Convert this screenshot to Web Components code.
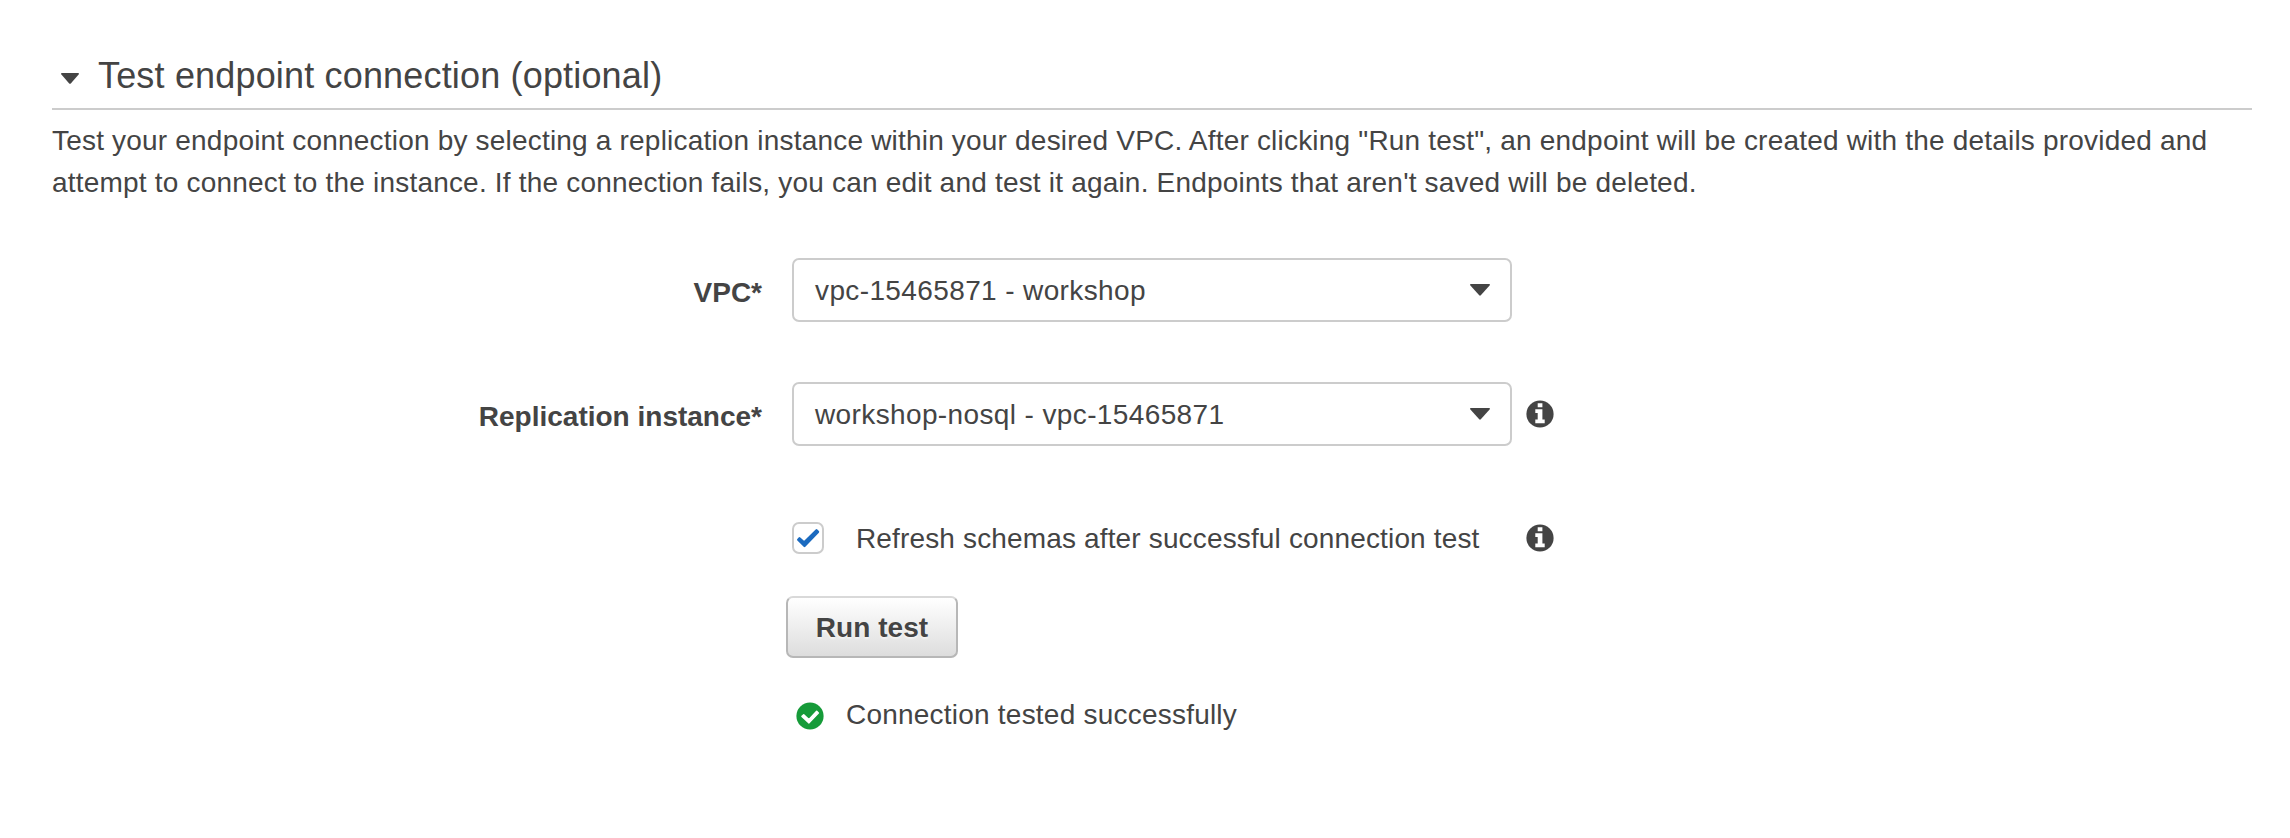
<!DOCTYPE html>
<html lang="en">
<head>
<meta charset="utf-8">
<title>Test endpoint connection</title>
<style>
body{margin:0;background:#fff;color:#444;font:28px/42px "Liberation Sans",Arial,sans-serif}
</style>
</head>
<body>
<endpoint-test></endpoint-test>
<script>
const define = (name, html) => customElements.define(name, class extends HTMLElement {
  constructor() {
    super();
    this.attachShadow({mode: 'open'}).innerHTML = html;
  }
});

define('section-heading', `
<style>
:host{display:flex;align-items:center;height:65px;padding-left:9px;border-bottom:2px solid #ccc;font-size:36px;letter-spacing:.17px}
svg{display:block;width:18px;height:11px;margin:6px 19px 0 0}
h2{margin:0;font:inherit;white-space:nowrap}
</style>
<svg viewBox="0 0 18 11"><path d="M.8 0h16.4q1.3.3.4 1.4L9.8 10.4q-.8.8-1.6 0L.4 1.4Q-.5.3.8 0Z" fill="#444"/></svg>
<h2><slot></slot></h2>`);

define('form-row', `
<style>
:host{display:grid;grid-template-columns:710px auto auto;column-gap:30px;align-items:center;justify-content:start;height:64px;margin-bottom:60px}
.label{font-weight:bold;text-align:right;white-space:nowrap;padding-top:5px}
.field{display:flex;align-items:center}
</style>
<div class="label"><slot name="label"></slot></div>
<div class="field"><slot></slot></div>`);

define('select-box', `
<style>
:host{display:flex;box-sizing:border-box;width:720px;height:64px;align-items:center;justify-content:space-between;border:2px solid #ccc;border-radius:7px;padding:0 20px 0 21px;letter-spacing:.38px;white-space:nowrap}
span{padding-top:2px}
svg{display:block;width:20px;height:12px}
</style>
<span><slot></slot></span>
<svg viewBox="0 0 20 12"><path d="M.8 0h18.4q1.3.3.4 1.5L10.8 11.3q-.8.8-1.6 0L.4 1.5Q-.5.3.8 0Z" fill="#444"/></svg>`);

define('info-icon', `
<style>:host{display:block;margin-left:14px}svg{display:block;width:28px;height:28px}</style>
<svg viewBox="0 0 28 28"><circle cx="14" cy="14" r="13.6" fill="#444"/><path d="M11.7 3.2h4.7v4.1h-4.7zM9.3 9.3h7.1v10.2h2.3v3.7H9.3v-3.7h2.4V13H9.3z" fill="#fff"/></svg>`);

define('check-box', `
<style>
:host{display:flex;align-items:center;width:720px;white-space:nowrap;letter-spacing:.15px}
.box{box-sizing:border-box;width:32px;height:32px;border:2px solid #ccc;border-radius:7px;margin-right:32px}
span{padding-top:2px}
svg{display:block;width:28px;height:28px}
</style>
<div class="box"><svg viewBox="0 0 28 28"><path d="M4.2 15.7 5.5 14.3 10 18.5 22.5 6.3 24 7.8 10.5 22Z" fill="#1b6abf" stroke="#1b6abf" stroke-width="2.4" stroke-linejoin="round"/></svg></div>
<span><slot></slot></span>`);

define('push-button', `
<style>
:host{display:block;width:172px;height:62px}
button{box-sizing:border-box;width:100%;height:100%;padding:1px 0 0;border:2px solid #b7b7b7;border-top-color:#d9d9d9;border-radius:7px;background:linear-gradient(#fff,#ddd);color:inherit;font:bold 28px/42px "Liberation Sans",Arial,sans-serif;letter-spacing:.05px;text-shadow:0 2px 2px #fff8}
</style>
<button type="button"><slot></slot></button>`);

define('status-message', `
<style>
:host{display:flex;align-items:center;white-space:nowrap;letter-spacing:.22px}
svg{display:block;width:28px;height:28px;margin:2px 22px 0 0}
</style>
<svg viewBox="0 0 28 28"><circle cx="14" cy="14" r="13.6" fill="#169b39"/><path d="M6 14.3 7.7 12.9 12.8 17.7 20.7 9.4 22.3 11 13 20.8Z" fill="#fff" stroke="#fff" stroke-width="1.6" stroke-linejoin="round"/></svg>
<slot></slot>`);

define('endpoint-test', `
<style>
:host{display:block;padding:43px 38px 0 52px}
p{margin:10px 0 54px;letter-spacing:.195px;white-space:nowrap}
.actions{display:flex;flex-direction:column;align-items:flex-start;padding-left:734px;margin-top:-34px}
status-message{margin:36px 0 0 10px}
</style>
<section-heading>Test endpoint connection (optional)</section-heading>
<p>Test your endpoint connection by selecting a replication instance within your desired VPC. After clicking "Run test", an endpoint will be created with the details provided and<br>attempt to connect to the instance. If the connection fails, you can edit and test it again. Endpoints that aren't saved will be deleted.</p>
<form-row><span slot="label">VPC*</span><select-box>vpc-15465871 - workshop</select-box></form-row>
<form-row><span slot="label">Replication instance*</span><select-box>workshop-nosql - vpc-15465871</select-box><info-icon></info-icon></form-row>
<form-row><check-box>Refresh schemas after successful connection test</check-box><info-icon></info-icon></form-row>
<div class="actions">
<push-button>Run test</push-button>
<status-message>Connection tested successfully</status-message>
</div>`);
</script>
</body>
</html>
